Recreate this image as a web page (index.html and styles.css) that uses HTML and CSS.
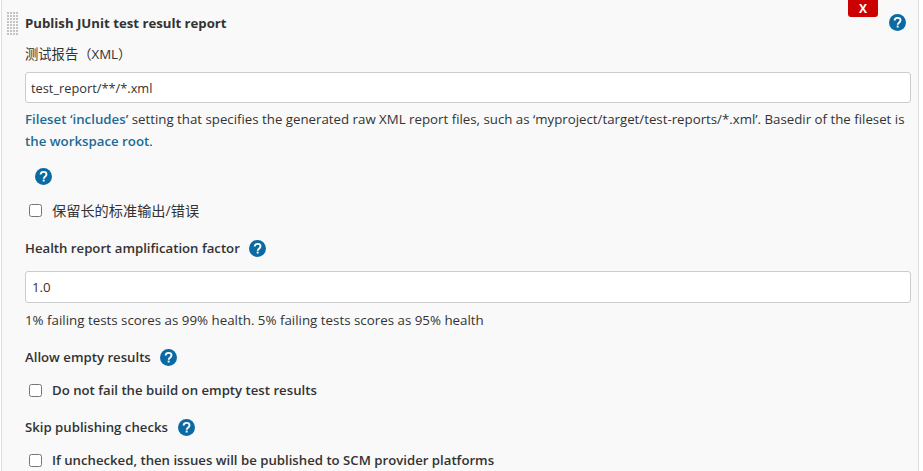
FILE: index.html
```html
<!DOCTYPE html>
<html lang="zh">
<head>
    <meta charset="UTF-8">
    <meta name="viewport" content="width=device-width, initial-scale=1.0">
    <title>Publish JUnit test result report</title>
    <link rel="stylesheet" href="styles.css">
</head>
<body>
    <svg class="sprite" width="0" height="0">
        <symbol id="help" viewBox="0 0 17 17">
            <circle cx="8.5" cy="8.5" r="8.5" fill="#0b6aa2"/>
            <path d="M5.6 6.5C5.7 4.8 7 3.9 8.6 3.9c1.7 0 2.9 1 2.9 2.4 0 1.2-.7 1.8-1.5 2.4-.8.6-1.2 1-1.2 2" fill="none" stroke="#fff" stroke-width="1.9"/>
            <rect x="7.7" y="11.6" width="1.9" height="1.9" fill="#fff"/>
        </symbol>
    </svg>

    <div class="panel">
        <div class="chunk-header">
            <div class="handle"></div>
            <b class="chunk-title">Publish JUnit test result report</b>
            <button class="delete-btn">X</button>
            <svg class="help help-top"><use href="#help"/></svg>
        </div>

        <div class="field-label label-xml">测试报告（XML）</div>
        <input class="text-input text-input-small" type="text" value="test_report/**/*.xml">
        <p class="desc">
            <a href="#">Fileset ‘includes’</a> setting that specifies the generated raw XML report files, such as ‘myproject/target/test-reports/*.xml’. Basedir of the fileset is <a href="#">the workspace root</a>.
        </p>

        <div class="help-row"><svg class="help"><use href="#help"/></svg></div>
        <label class="check-row check-first"><input type="checkbox"><span>保留长的标准输出/错误</span></label>

        <div class="field-label label-health">Health report amplification factor <svg class="help"><use href="#help"/></svg></div>
        <input class="text-input text-input-big" type="text" value="1.0">
        <p class="desc desc-health">1% failing tests scores as 99% health. 5% failing tests scores as 95% health</p>

        <div class="field-label label-empty">Allow empty results <svg class="help"><use href="#help"/></svg></div>
        <label class="check-row"><input type="checkbox"><span>Do not fail the build on empty test results</span></label>

        <div class="field-label label-skip">Skip publishing checks <svg class="help"><use href="#help"/></svg></div>
        <label class="check-row"><input type="checkbox"><span>If unchecked, then issues will be published to SCM provider platforms</span></label>
    </div>
</body>
</html>
```

FILE: styles.css
```css
html, body {
    height: 471px;
    overflow: hidden;
}
body {
    margin: 0;
    background-color: #fff;
    color: #333;
    font-family: "Open Sans", "Noto Sans CJK SC", sans-serif;
    font-size: 13.27px;
}
.sprite {
    position: absolute;
}
.panel {
    width: 918px;
    height: 471px;
    box-sizing: border-box;
    margin-left: 1px;
    padding: 0 7px 0 23px;
    background-color: #f9f9f9;
    border-left: 1px solid #ddd;
    border-right: 1px solid #ddd;
}
.chunk-header {
    position: relative;
    display: flex;
    align-items: center;
    height: 46px;
}
.handle {
    position: absolute;
    left: -18px;
    top: 12px;
    width: 12px;
    height: 24px;
    background-image: radial-gradient(circle at 1px 1px, #c4c4c4 1px, transparent 1px);
    background-size: 3px 3px;
}
.chunk-title {
    font-weight: 700;
    font-size: 13.2px;
    color: #333;
}
.delete-btn {
    position: absolute;
    right: 33px;
    top: 0;
    width: 30px;
    height: 17px;
    padding: 0;
    border: none;
    border-radius: 0 0 3px 3px;
    background-color: #cc0000;
    color: #fff;
    font-family: inherit;
    font-size: 12px;
    font-weight: 700;
}
.help {
    width: 17px;
    height: 17px;
    vertical-align: middle;
}
.help-top {
    position: absolute;
    right: 5px;
    top: 14px;
}
.field-label {
    display: flex;
    align-items: center;
    gap: 9px;
    height: 18px;
    font-size: 13.2px;
    font-weight: 600;
}
.label-xml {
    font-size: 13.3px;
    font-weight: 400;
    margin-top: -1px;
    margin-bottom: 9px;
    line-height: 18px;
}
.text-input {
    display: block;
    width: 100%;
    height: 31px;
    box-sizing: border-box;
    padding: 0 5px;
    border: 1px solid #ccc;
    border-radius: 3px;
    background-color: #fff;
    color: #333;
    font: inherit;
}
.text-input-small {
    font-size: 12.8px;
}
.text-input-big {
    height: 32px;
    padding: 0 6px;
}
.desc {
    margin: 5px 0 0;
    line-height: 22px;
}
.desc a {
    color: #1e6a96;
    font-weight: 600;
    text-decoration: none;
}
.help-row {
    display: flex;
    height: 17px;
    margin: 16px 0 0 10px;
}
.check-row {
    display: flex;
    align-items: center;
    height: 18px;
    margin-top: 15px;
    padding-left: 4px;
    font-size: 13.2px;
    font-weight: 600;
}
.check-row input {
    width: 13px;
    height: 13px;
    margin: 0 10px 0 0;
}
.check-first {
    margin-top: 16px;
    font-size: 14.2px;
    font-weight: 400;
}
.label-health {
    margin-top: 20px;
    margin-bottom: 14px;
}
.desc-health {
    margin-top: 6px;
    font-size: 13.33px;
}
.label-empty {
    margin-top: 17px;
}
.label-skip {
    margin-top: 19px;
    gap: 10px;
}
```
